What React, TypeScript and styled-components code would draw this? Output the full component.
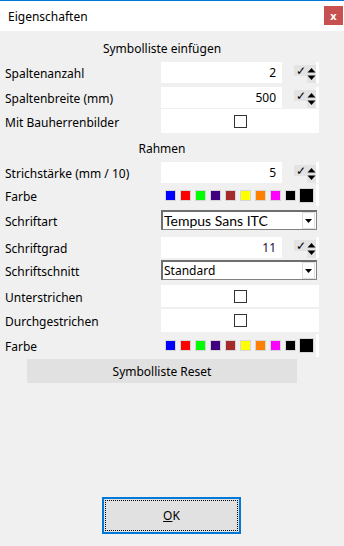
import React from 'react';
import styled, { createGlobalStyle } from 'styled-components';

const GlobalStyle = createGlobalStyle`
  html, body {
    margin: 0;
    padding: 0;
    background: #f0f0f0;
  }
  body {
    font-family: 'Noto Sans', 'Open Sans', sans-serif;
    font-size: 12px;
    color: #000;
  }
`;

const colors = ['#0000ff', '#ff0000', '#00ff00', '#400080', '#a52a2a', '#ffff00', '#ff8000', '#ff00ff', '#000000'];

interface IRow {
  $h: number;
  $mt: number;
}

interface ISpin {
  value: string;
  $color?: string;
}

const Spinner = ({ value, $color }: ISpin) => (
  <Control>
    <NumberBox $color={$color}>{value}</NumberBox>
    <SpinBox>
      <Check>✓</Check>
      <Arrows>
        <svg width="9" height="16" viewBox="0 0 9 16">
          <path d="M0.5 6.5 L4.5 2 L8.5 6.5 Z" fill="#000" />
          <path d="M0.5 9.5 L4.5 14 L8.5 9.5 Z" fill="#000" />
        </svg>
      </Arrows>
    </SpinBox>
    <Strip />
  </Control>
);

const Swatches = () => (
  <Control>
    <SwatchRow>
      {colors.map((c) => (
        <Swatch key={c} style={{ background: c }} />
      ))}
      <BigSwatch />
    </SwatchRow>
    <Strip />
  </Control>
);

const Select = ({ value, fancy }: { value: string; fancy?: boolean }) => (
  <SelectBox>
    <SelectText $fancy={fancy}>{value}</SelectText>
    <DropButton>
      <svg width="7" height="4" viewBox="0 0 7 4">
        <path d="M0 0 L7 0 L3.5 4 Z" fill="#000" />
      </svg>
    </DropButton>
  </SelectBox>
);

const App: React.FunctionComponent = () => {
  return (
    <Window>
      <GlobalStyle />
      <TitleBar>
        <Title>Eigenschaften</Title>
        <Close>x</Close>
      </TitleBar>
      <Body>
        <Header $h={20} $mt={7}>Symbolliste einfügen</Header>
        <Row $h={20} $mt={4}>
          <Label>Spaltenanzahl</Label>
          <Spinner value="2" />
        </Row>
        <Row $h={20} $mt={5}>
          <Label>Spaltenbreite (mm)</Label>
          <Spinner value="500" />
        </Row>
        <Row $h={24} $mt={2}>
          <Label>Mit Bauherrenbilder</Label>
          <CheckField>
            <CheckBox />
          </CheckField>
        </Row>
        <Header $h={20} $mt={5}>Rahmen</Header>
        <Row $h={20} $mt={4}>
          <Label>Strichstärke (mm / 10)</Label>
          <Spinner value="5" />
        </Row>
        <Row $h={22} $mt={2}>
          <Label>Farbe</Label>
          <Swatches />
        </Row>
        <Row $h={20} $mt={4}>
          <Label>Schriftart</Label>
          <Select value="Tempus Sans ITC" fancy />
        </Row>
        <Row $h={20} $mt={7}>
          <Label>Schriftgrad</Label>
          <Spinner value="11" $color="#1a0a3a" />
        </Row>
        <Row $h={18} $mt={3}>
          <Label>Schriftschnitt</Label>
          <Select value="Standard" />
        </Row>
        <Row $h={22} $mt={7}>
          <Label>Unterstrichen</Label>
          <CheckField>
            <CheckBox />
          </CheckField>
        </Row>
        <Row $h={23} $mt={2}>
          <Label>Durchgestrichen</Label>
          <CheckField>
            <CheckBox />
          </CheckField>
        </Row>
        <Row $h={23} $mt={2}>
          <Label>Farbe</Label>
          <Swatches />
        </Row>
        <ResetButton>Symbolliste Reset</ResetButton>
        <Footer>
          <OkButton>
            <FocusRect>
              <u>O</u>K
            </FocusRect>
          </OkButton>
        </Footer>
      </Body>
    </Window>
  );
};

const Window = styled.div`
  width: 344px;
  height: 546px;
  background: #f0f0f0;
  border-top: 1px solid #0078d7;
  box-sizing: border-box;
  display: flex;
  flex-direction: column;
`;

const TitleBar = styled.div`
  height: 30px;
  background: #fff;
  display: flex;
  align-items: center;
  justify-content: space-between;
  padding-left: 8px;
`;

const Title = styled.div`
  font-size: 12px;
  color: #000;
`;

const Close = styled.div`
  width: 19px;
  height: 19px;
  margin-right: 1px;
  margin-top: -1px;
  background: #c75050;
  color: #fff;
  font-weight: 700;
  font-size: 11px;
  display: flex;
  align-items: center;
  justify-content: center;
`;

const Body = styled.div`
  flex: 1;
  display: flex;
  flex-direction: column;
  padding-left: 5px;
`;

const Header = styled.div<IRow>`
  height: ${({ $h }) => $h}px;
  margin-top: ${({ $mt }) => $mt}px;
  width: 314px;
  display: flex;
  align-items: center;
  justify-content: center;
`;

const Row = styled.div<IRow>`
  height: ${({ $h }) => $h}px;
  margin-top: ${({ $mt }) => $mt}px;
  display: grid;
  grid-template-columns: 156px 158px;
  align-items: center;
`;

const Label = styled.div`
  white-space: nowrap;
  padding-top: 2px;
`;

const Control = styled.div`
  height: 100%;
  display: flex;
  align-items: center;
`;

const NumberBox = styled.div<{ $color?: string }>`
  width: 117px;
  height: 100%;
  background: #fff;
  padding-right: 6px;
  display: flex;
  align-items: center;
  justify-content: flex-end;
  color: ${({ $color }) => $color || '#000'};
`;

const SpinBox = styled.div`
  margin-left: 12px;
  display: flex;
  align-items: center;
  height: 100%;
`;

const Check = styled.div`
  width: 13px;
  height: 11px;
  background: #e3e3e3;
  font-size: 12px;
  line-height: 11px;
  display: flex;
  align-items: center;
  justify-content: center;
  margin-top: -4px;
`;

const Arrows = styled.div`
  width: 9px;
  height: 18px;
  background: #e3e3e3;
  display: flex;
  align-items: center;
  justify-content: center;
  margin-top: 3px;
`;

const Strip = styled.div`
  margin-left: auto;
  width: 3px;
  height: 100%;
  background: #fff;
`;

const SwatchRow = styled.div`
  display: flex;
  align-items: center;
  gap: 4px;
  padding-left: 4px;
`;

const Swatch = styled.div`
  width: 11px;
  height: 11px;
  box-sizing: border-box;
  border: 1px solid #d6d6d6;
`;

const BigSwatch = styled.div`
  width: 15px;
  height: 15px;
  box-sizing: border-box;
  background: #000;
  border: 1px solid #d6d6d6;
  margin-left: -1px;
`;

const SelectBox = styled.div`
  width: 156px;
  height: 100%;
  box-sizing: border-box;
  border: 1px solid #828282;
  border-top: 2px solid #6e6e6e;
  border-left: 2px solid #6e6e6e;
  background: #fff;
  display: flex;
  align-items: center;
  justify-content: space-between;
`;

const SelectText = styled.div<{ $fancy?: boolean }>`
  padding-left: 1px;
  font-size: ${({ $fancy }) => ($fancy ? '14px' : '12px')};
  font-family: ${({ $fancy }) => ($fancy ? "'Lato', sans-serif" : "'Noto Sans', sans-serif")};
  color: #000;
  white-space: nowrap;
`;

const DropButton = styled.div`
  width: 11px;
  height: calc(100% - 2px);
  margin-right: 1px;
  border: 1px solid #dcdcdc;
  background: #fff;
  display: flex;
  align-items: center;
  justify-content: center;
`;

const CheckField = styled.div`
  height: 100%;
  background: #fff;
  display: flex;
  align-items: center;
  justify-content: center;
`;

const CheckBox = styled.div`
  width: 11px;
  height: 11px;
  border: 1px solid #333;
  background: #fff;
`;

const ResetButton = styled.div`
  margin-top: 2px;
  margin-left: 22px;
  width: 270px;
  height: 24px;
  background: #e1e1e1;
  display: flex;
  align-items: center;
  justify-content: center;
`;

const Footer = styled.div`
  margin-top: 114px;
  display: flex;
  padding-left: 97px;
`;

const OkButton = styled.div`
  width: 139px;
  height: 37px;
  box-sizing: border-box;
  border: 2px solid #0078d7;
  background: #e1e1e1;
  padding: 1px;
`;

const FocusRect = styled.div`
  height: 100%;
  box-sizing: border-box;
  border: 1px dotted #000;
  display: flex;
  align-items: center;
  justify-content: center;
  color: #000;
`;

export default App;
